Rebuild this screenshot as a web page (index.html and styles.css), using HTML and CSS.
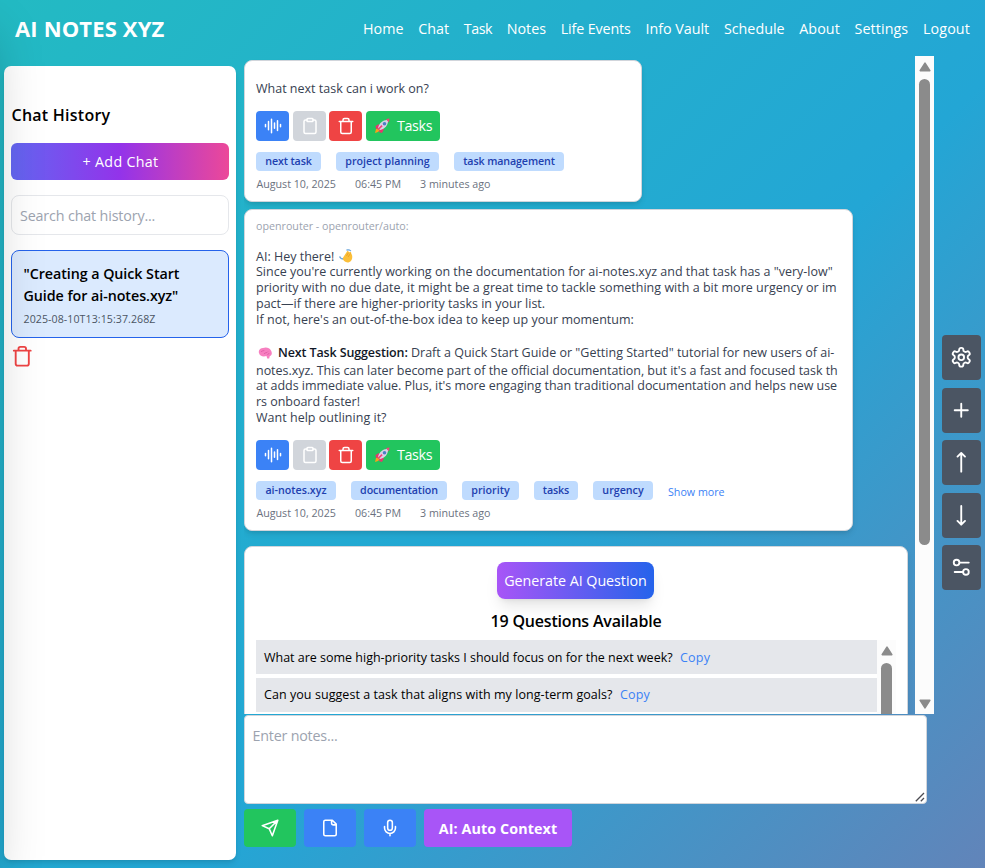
FILE: index.html
```html
<!DOCTYPE html>
<html lang="en">
<head>
<meta charset="utf-8">
<title>AI Notes XYZ</title>
<link rel="stylesheet" href="styles.css">
</head>
<body>
<svg class="sprite" aria-hidden="true">
  <symbol id="wave" viewBox="0 0 24 24"><path d="M2 10v3M6 6v11M10 3v18M14 8v7M18 5v13M22 10v3"/></symbol>
  <symbol id="clip" viewBox="0 0 24 24"><rect x="8" y="2" width="8" height="4" rx="1"/><path d="M16 4h2a2 2 0 0 1 2 2v14a2 2 0 0 1-2 2H6a2 2 0 0 1-2-2V6a2 2 0 0 1 2-2h2"/></symbol>
  <symbol id="trash" viewBox="0 0 24 24"><path d="M3 6h18M19 6v14c0 1-1 2-2 2H7c-1 0-2-1-2-2V6M8 6V4c0-1 1-2 2-2h4c1 0 2 1 2 2v2"/></symbol>
  <symbol id="rocket" viewBox="0 0 16 16"><path fill="#f9a01b" d="M1 15l1-4 3-1 1 2-2 2z"/><path fill="#e8366f" d="M5 6L1.500 8 2 11l3-1zM10 11l-2 4-3-1 1-3z"/><path fill="#d6d3e6" d="M4 10C5 5 9 2 13 2l1 1c0 4-3 8-8 9z"/><path fill="#f0447a" d="M12 1l3.500-.5L15 4.500zM3.500 11l4-4 1.200 1.200-4.200 4z"/><circle cx="10.500" cy="5.700" r="1.800" fill="#4d7fc4"/></symbol>
  <symbol id="up" viewBox="0 0 12 10"><path d="M6 1.200 10.800 8.600H1.200z" fill="#8b8b8b" stroke="#8b8b8b" stroke-width="1.600" stroke-linejoin="round"/></symbol>
</svg>
<div class="drawer"></div>
<header class="nav">
  <a class="logo">AI NOTES XYZ</a>
  <nav class="links"><a>Home</a><a>Chat</a><a>Task</a><a>Notes</a><a>Life Events</a><a>Info Vault</a><a>Schedule</a><a>About</a><a>Settings</a><a>Logout</a></nav>
</header>
<main class="main">
  <aside class="side">
    <h2>Chat History</h2>
    <button class="add">+ Add Chat</button>
    <div class="search">Search chat history...</div>
    <div class="item">
      <div class="ttl">"Creating a Quick Start<br>Guide for ai-notes.xyz"</div>
      <div class="stamp">2025-08-10T13:15:37.268Z</div>
    </div>
    <svg class="ic del"><use href="#trash"/></svg>
  </aside>
  <section class="chat">
    <div class="view">
      <div class="feed">
        <article class="card c1">
          <p class="line">What next task can i work on?</p>
          <div class="acts"><button class="b blue"><svg class="ic"><use href="#wave"/></svg></button><button class="b gray"><svg class="ic"><use href="#clip"/></svg></button><button class="b red"><svg class="ic"><use href="#trash"/></svg></button><button class="b green"><svg class="em"><use href="#rocket"/></svg>Tasks</button></div>
          <div class="tags"><span class="tag t65 tight">next task</span><span class="tag t103">project planning</span><span class="tag t110 tight">task management</span></div>
          <div class="meta"><span>August 10, 2025</span><span>06:45 PM</span><span>3 minutes ago</span></div>
        </article>
        <article class="card c2">
          <p class="model">openrouter - openrouter/auto:</p>
          <div class="body">
            <p class="hey">AI: Hey there!<svg class="hand" viewBox="0 0 14 14"><path fill="#fbbf3a" d="M3.500 9.500 8 2.500c.8-1 2 0 1.500 1L11 3c1 0 1.500.7 1.200 1.500L13 6c.8 3-.2 6.500-3 7.200C7 14 4.500 12 3.500 9.500z"/><path fill="none" stroke="#e59a1f" stroke-width=".7" d="M7.500 7 9.500 3.500M9 8l2.500-3.500"/><path fill="none" stroke="#6fa8dc" stroke-width="1.300" d="M.5 7.500 2 9.500l2 .5M7.500 1 10 .8l2 1.200"/></svg></p>
            <p>Since you're currently working on the documentation for ai-notes.xyz and that task has a "very-low"</p>
            <p class="open">priority with no due date, it might be a great time to tackle something with a bit more urgency or im</p>
            <p>pact—if there are higher-priority tasks in your list.</p>
            <p class="open">If not, here's an out-of-the-box idea to keep up your momentum:</p>
            <p class="lead"><svg class="brain" viewBox="0 0 14 12"><path fill="#f77fc0" d="M1 6C0 3 2.500 1 5 1c3-1.300 6.500-.3 7.800 2.200C14.500 5.500 14 8.500 11.800 9l-.6 2.600-2-.2L8.500 9C5 10 1.500 9 1 6z"/><path fill="none" stroke="#d9539f" stroke-width=".7" d="M3 5c1-2 3-.5 3.500-2M6 7c1-2 3-.5 4-2.500M9.500 8c0-1 1.500-1 2-2"/></svg><strong>Next Task Suggestion:</strong> Draft a Quick Start Guide or "Getting Started" tutorial for new users of ai-</p>
            <p class="close">notes.xyz. This can later become part of the official documentation, but it's a fast and focused task th</p>
            <p class="close">at adds immediate value. Plus, it's more engaging than traditional documentation and helps new use</p>
            <p class="close">rs onboard faster!</p>
            <p class="open">Want help outlining it?</p>
          </div>
          <div class="acts"><button class="b blue"><svg class="ic"><use href="#wave"/></svg></button><button class="b gray"><svg class="ic"><use href="#clip"/></svg></button><button class="b red"><svg class="ic"><use href="#trash"/></svg></button><button class="b green"><svg class="em"><use href="#rocket"/></svg>Tasks</button></div>
          <div class="tags"><span class="tag t80">ai-notes.xyz</span><span class="tag t96 tight">documentation</span><span class="tag t57">priority</span><span class="tag t44 tight">tasks</span><span class="tag t60">urgency</span><a class="more">Show more</a></div>
          <div class="meta"><span>August 10, 2025</span><span>06:45 PM</span><span>3 minutes ago</span></div>
        </article>
        <article class="card c3">
          <button class="gen">Generate AI Question</button>
          <h3>19 Questions Available</h3>
          <div class="qbox">
            <div class="qs">
              <div class="q"><span>What are some high-priority tasks I should focus on for the next week?</span><a>Copy</a></div>
              <div class="q"><span class="wide">Can you suggest a task that aligns with my long-term goals?</span><a>Copy</a></div>
            </div>
            <div class="bar inner"><svg class="arr"><use href="#up"/></svg><div class="thumb"></div></div>
          </div>
        </article>
      </div>
      <div class="bar outer"><svg class="arr"><use href="#up"/></svg><div class="thumb"></div><svg class="arr down"><use href="#up"/></svg></div>
    </div>
    <div class="notes">Enter notes...<svg class="grip" viewBox="0 0 10 10"><path d="M.8 9.200 9 1M5.800 9.200 9 6" stroke="#4b4b52" stroke-width="1.300"/></svg></div>
    <div class="tools">
      <button class="tool send"><svg class="ic"><path d="m22 2-7 20-4-9-9-4ZM22 2 11 13"/></svg></button>
      <button class="tool"><svg class="ic"><path d="M15 2H6a2 2 0 0 0-2 2v16a2 2 0 0 0 2 2h12a2 2 0 0 0 2-2V7ZM14 2v4a2 2 0 0 0 2 2h4"/></svg></button>
      <button class="tool"><svg class="ic"><path d="M12 2a3 3 0 0 0-3 3v7a3 3 0 0 0 6 0V5a3 3 0 0 0-3-3ZM19 10v2a7 7 0 0 1-14 0v-2M12 19v3"/></svg></button>
      <button class="ctx">AI: Auto Context</button>
    </div>
  </section>
  <div class="rail">
    <button><svg class="ic" viewBox="0 0 24 24"><path d="M12.220 2h-.44a2 2 0 0 0-2 2v.18a2 2 0 0 1-1 1.730l-.43.250a2 2 0 0 1-2 0l-.15-.08a2 2 0 0 0-2.730.730l-.22.380a2 2 0 0 0 .73 2.730l.15.100a2 2 0 0 1 1 1.720v.510a2 2 0 0 1-1 1.740l-.15.090a2 2 0 0 0-.73 2.730l.22.380a2 2 0 0 0 2.730.730l.15-.08a2 2 0 0 1 2 0l.43.250a2 2 0 0 1 1 1.730V20a2 2 0 0 0 2 2h.44a2 2 0 0 0 2-2v-.18a2 2 0 0 1 1-1.730l.43-.25a2 2 0 0 1 2 0l.15.080a2 2 0 0 0 2.730-.73l.22-.39a2 2 0 0 0-.73-2.730l-.15-.08a2 2 0 0 1-1-1.740v-.5a2 2 0 0 1 1-1.740l.15-.09a2 2 0 0 0 .73-2.730l-.22-.38a2 2 0 0 0-2.730-.73l-.15.080a2 2 0 0 1-2 0l-.43-.25a2 2 0 0 1-1-1.730V4a2 2 0 0 0-2-2z"/><circle cx="12" cy="12" r="3"/></svg></button>
    <button><svg class="ic" viewBox="0 0 24 24"><path d="M5 12h14M12 5v14"/></svg></button>
    <button><svg class="ic" viewBox="0 0 24 24"><path d="M8 6l4-4 4 4M12 2v20"/></svg></button>
    <button><svg class="ic" viewBox="0 0 24 24"><path d="M8 18l4 4 4-4M12 2v20"/></svg></button>
    <button><svg class="ic" viewBox="0 0 24 24"><path d="M20 7h-9M14 17H5"/><circle cx="17" cy="17" r="3"/><circle cx="7" cy="7" r="3"/></svg></button>
  </div>
</main>
</body>
</html>
```
FILE: styles.css
```css
*{box-sizing:border-box;margin:0;padding:0}
body{width:985px;height:868px;overflow:hidden;font-family:"Open Sans","Noto Sans",sans-serif;font-size:14.300px;
background:linear-gradient(-45deg,#ee7752,#e73c7e,#23a6d5,#23d5ab) 3.500% 50%/400% 400%}
button{font:inherit;color:#fff;border:0}
.sprite{position:absolute;width:0;height:0}
.ic{fill:none;stroke:currentColor;stroke-width:2;stroke-linecap:round;stroke-linejoin:round;width:18px;height:18px;flex:none}
.drawer{position:fixed;left:-240px;top:0;width:240px;height:868px;box-shadow:0 25px 50px -12px rgba(0,0,0,.25);z-index:5;pointer-events:none}

.nav{height:56px;display:flex;justify-content:space-between;align-items:center;padding:0 15px;color:#fff}
.logo{font-size:22px;font-weight:700;letter-spacing:.15px}
.links{display:flex;gap:14.700px}
.links a:nth-child(3){letter-spacing:-.5px}
.links a:nth-child(5){letter-spacing:-.13px}
.links a:nth-child(1),.links a:nth-child(8),.links a:nth-child(9){letter-spacing:.08px}
.links a:nth-child(10){letter-spacing:.13px}

.main{display:flex;height:812px}
.side{background:#fff;width:232px;height:794px;margin:10px 4px 0;padding:38px 7px 0;border-radius:7px;box-shadow:0 4px 6px -1px rgba(0,0,0,.1),0 2px 4px -2px rgba(0,0,0,.1)}
h2{font-size:16px;line-height:22px;font-weight:600;letter-spacing:.25px;margin-bottom:17px;padding-left:.5px}
.add{display:block;width:100%;height:37px;padding-left:1px;border-radius:6px;letter-spacing:.3px;background:linear-gradient(90deg,#6366f1,#9333ea,#ec4899)}
.search{height:40px;line-height:39px;margin:15px 0;padding:0 8px;border:1px solid #e5e7eb;border-radius:8px;color:#9ca3af;letter-spacing:-.15px}
.item{height:88px;border:1px solid #2563eb;border-radius:8px;background:#dbeafe;padding:12px 11.500px}
.ttl{line-height:22px;font-weight:600;letter-spacing:-.06px;color:#000}
.stamp{font-size:10.600px;line-height:15px;margin-top:5px;color:#4b5563;letter-spacing:.08px}
.del{display:block;width:22.500px;height:22.500px;margin-top:7px;color:#ef4444}

.chat{width:694px;padding-left:4px}
.view{display:flex;height:658px;overflow:hidden}
.feed{width:671px;padding-top:4px}
.card{background:#fff;border:1px solid #d1d5db;border-radius:8px;padding:0 11px;box-shadow:0 4px 6px -1px rgba(0,0,0,.1),0 2px 4px -2px rgba(0,0,0,.1);color:#374151}
.c1{width:398px;height:142px;padding-top:20px;margin-bottom:7px}
.c1 .acts{margin-top:14px}
.c2{width:609px;height:322px;padding-top:8px;margin-bottom:15px}
.c3{width:664px;height:300px;padding-top:15px}
.line,.body,.q{font-size:12.500px}
.line{line-height:16px}
.model{font-size:10.700px;line-height:16px;color:#9ca3af}
.body{margin-top:15px;margin-bottom:-1px;line-height:16px;white-space:nowrap}
.body .hey{display:flex;height:15px;line-height:15px}
.body p:nth-child(5){margin-bottom:17px}
.body .lead{height:18px}
.body p:nth-child(7){height:15px;line-height:15px}
.open{letter-spacing:.02px}
.close{letter-spacing:-.037px}
.lead strong{font-weight:600;color:#111827;letter-spacing:-.12px}
.hand{width:14px;height:14px;margin-left:5px}
.brain{width:14px;height:12px;vertical-align:-2px;margin:0 6px 0 2px}
.acts{display:flex;margin-top:15px}
.b{display:flex;align-items:center;justify-content:center;width:33px;height:30px;margin-right:4px;border-radius:4px}
.b.gray{margin-right:3px}
.blue{background:#3b82f6}.gray{background:#d1d5db}.red{background:#ef4444}
.green{width:74px;background:#22c55e;letter-spacing:-.35px;line-height:18px;padding-bottom:1px}
.em{width:16px;height:16px;margin-right:7px}
.tags{display:flex;gap:15px;margin-top:11px;font-size:10.700px;line-height:19px}
.tag{height:19px;border-radius:4px;background:#bfdbfe;color:#1e40af;font-weight:600;text-align:center;white-space:nowrap}
.tight{letter-spacing:-.12px}
.t44{width:44px}.t57{width:57px}.t60{width:60px}.t65{width:65px}.t80{width:80px}.t96{width:96px}.t103{width:103px}.t110{width:110px}
.more{color:#3b82f6;padding-top:2px;height:19px;letter-spacing:0}
.meta{display:flex;gap:19px;margin-top:5px;padding-left:.4px;font-size:10.700px;line-height:16px;color:#6b7280}

.gen{display:block;width:157px;height:37px;margin:0 auto 0 241px;border-radius:8px;background:linear-gradient(90deg,#a855f7,#2563eb);letter-spacing:-.045px;box-shadow:0 10px 15px -3px rgba(0,0,0,.1),0 4px 6px -4px rgba(0,0,0,.1);white-space:nowrap}
h3{font-size:16px;line-height:22px;font-weight:600;text-align:center;color:#000;letter-spacing:-.19px;margin:11px 0 8px}
.qbox{display:flex}
.qs{width:621px}
.q{display:flex;gap:7.500px;height:34px;line-height:35px;padding:0 8px;margin-bottom:4px;background:#e5e7eb;color:#000}
.q+.q{line-height:34px}
.q span{letter-spacing:-.01px}
.q a{color:#3b82f6;letter-spacing:.17px}
.q .wide{letter-spacing:.06px}
.bar{display:flex;flex-direction:column;align-items:center;width:19px;background:#fcfcfc}
.arr{width:12px;height:10px;margin:6px 0 7px;flex:none}
.thumb{width:11px;border-radius:6px;background:#8b8b8b;height:466px;flex:none}
.down{transform:rotate(180deg);margin:auto 0 5px}

.notes{position:relative;width:683px;height:89px;margin-top:1px;padding:10px 7.500px;line-height:20px;border:1px solid #d1d5db;border-radius:4px;background:#fff;color:#9ca3af;letter-spacing:-.21px}
.grip{position:absolute;right:1px;bottom:1px;width:10px;height:10px}
.tools{display:flex;gap:8px;margin-top:5px}
.tool{display:flex;align-items:center;justify-content:center;width:52px;height:38px;border-radius:4px;background:#3b82f6}
.tool svg{width:24px;height:24px;transform:scale(.78)}
.send{background:#22c55e}
.ctx{width:148px;height:38px;border-radius:4px;background:#a855f7;font-weight:700;letter-spacing:.1px}
.rail{padding:279px 0 0 8px}
.rail button{display:flex;align-items:center;justify-content:center;width:39px;height:45px;margin-bottom:7.500px;border-radius:4px;background:#4b5563}
.rail .ic{width:22.500px;height:22.500px}
```
